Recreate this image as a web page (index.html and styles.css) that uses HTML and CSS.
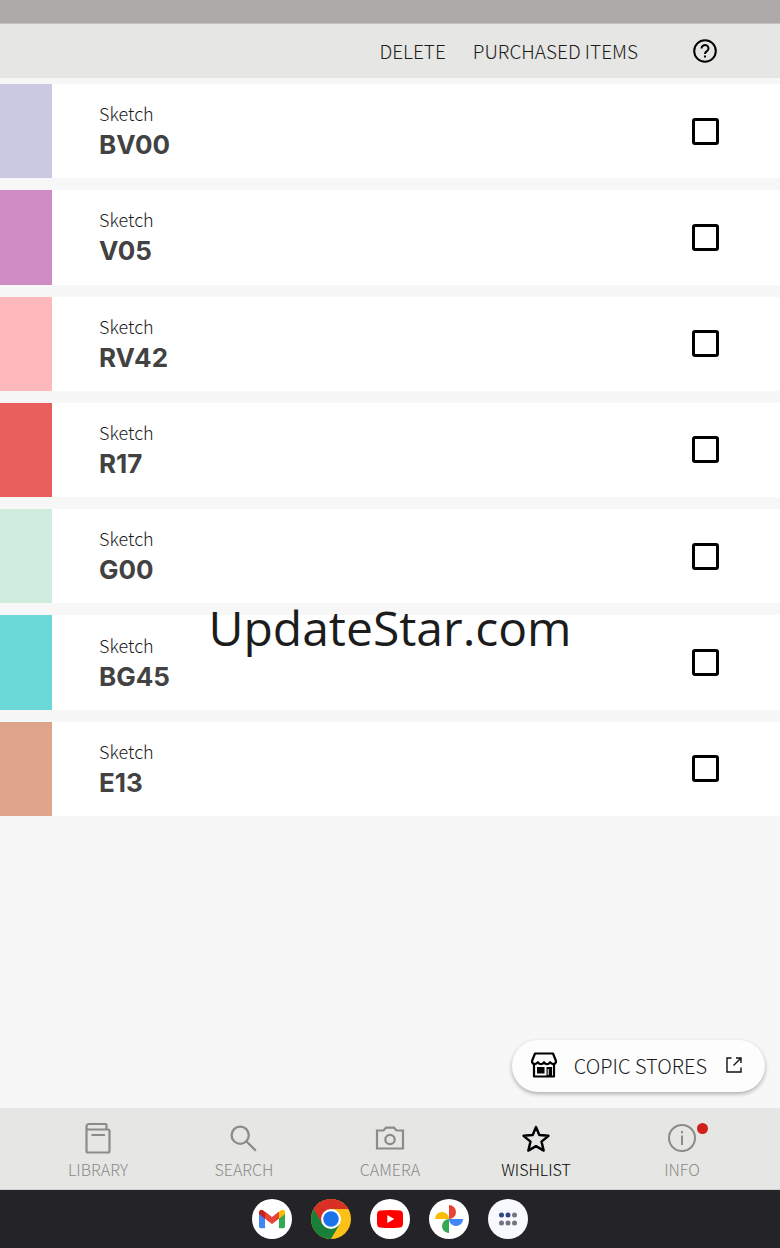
FILE: index.html
```html
<!DOCTYPE html>
<html lang="en">
<head>
<meta charset="utf-8">
<meta name="viewport" content="width=device-width, initial-scale=1">
<title>Wishlist</title>
<link rel="stylesheet" href="styles.css">
</head>
<body>
<div class="app">
  <div class="status-bar"></div>
  <header class="toolbar">
    <button class="toolbar-action" type="button">DELETE</button>
    <button class="toolbar-action" type="button">PURCHASED ITEMS</button>
    <button class="help" type="button" aria-label="Help">
      <svg width="24" height="24" viewBox="0 0 24 24" fill="none" stroke="#000" stroke-width="2"><circle cx="12" cy="12" r="10.8"/><path d="M8.500 9.400a3.500 3.300 0 1 1 5.400 2.700c-1.200.9-1.900 1.400-1.900 2.900"/><path d="M12 16.400v2.200"/></svg>
    </button>
  </header>
  <main class="content">
    <ul class="list">
      <li class="row"><span class="swatch bv00"></span><label class="name" for="c1"><span class="kind">Sketch</span><span class="code">BV00</span></label><input class="check" type="checkbox" id="c1"></li>
      <li class="row"><span class="swatch v05"></span><label class="name" for="c2"><span class="kind">Sketch</span><span class="code">V05</span></label><input class="check" type="checkbox" id="c2"></li>
      <li class="row"><span class="swatch rv42"></span><label class="name" for="c3"><span class="kind">Sketch</span><span class="code">RV42</span></label><input class="check" type="checkbox" id="c3"></li>
      <li class="row"><span class="swatch r17"></span><label class="name" for="c4"><span class="kind">Sketch</span><span class="code">R17</span></label><input class="check" type="checkbox" id="c4"></li>
      <li class="row"><span class="swatch g00"></span><label class="name" for="c5"><span class="kind">Sketch</span><span class="code">G00</span></label><input class="check" type="checkbox" id="c5"></li>
      <li class="row"><span class="swatch bg45"></span><label class="name" for="c6"><span class="kind">Sketch</span><span class="code">BG45</span></label><input class="check" type="checkbox" id="c6"></li>
      <li class="row"><span class="swatch e13"></span><label class="name" for="c7"><span class="kind">Sketch</span><span class="code">E13</span></label><input class="check" type="checkbox" id="c7"></li>
    </ul>
    <a class="stores" href="#stores">
      <svg width="28" height="28" viewBox="0 0 28 28" fill="none" stroke="#000" stroke-width="2.2" stroke-linejoin="round"><path d="M5 2.500h18l3 7.500c0 3.800-4 3.800-6 1.200-1.500 2.600-4.500 2.600-6 0-1.500 2.600-4.500 2.600-6 0-2 2.600-6 2.600-6-1.200z"/><path d="M4 13v12.500h20V13"/><path d="M7 16h7.500v6.500H7z" fill="#000" stroke="none"/><path d="M16.500 25.500V16H22v9.500z" fill="#000" stroke="none"/><path d="M18.200 18v6" stroke="#fff" stroke-width="1"/></svg>
      <span class="stores-label">COPIC STORES</span>
      <svg class="external" width="16" height="16" viewBox="0 0 16 16" fill="none" stroke="#111" stroke-width="1.400"><path d="M5.500 1H1v14h14v-4.500M10 1h5v5M15 1 7.500 8.500"/></svg>
    </a>
  </main>
  <nav class="tabs">
    <a class="tab" href="#library"><svg width="32" height="32" viewBox="0 0 32 32" fill="none" stroke="currentColor" stroke-width="2.200" stroke-linejoin="round"><path d="M4.500 4.500v24.500a1.500 1.500 0 0 0 1.500 1.500h20a1.500 1.500 0 0 0 1.500-1.500V9a1.500 1.500 0 0 0-1.500-1.500H6.500a2 2 0 0 1-2-2V4.500A2.500 2.500 0 0 1 7 2h16.500a1 1 0 0 1 1 1v4.500M9.500 13h13.500"/></svg><span>LIBRARY</span></a>
    <a class="tab" href="#search"><svg width="32" height="32" viewBox="0 0 32 32" fill="none" stroke="currentColor" stroke-width="2.300"><circle cx="12.200" cy="13.200" r="8.600"/><path d="m18.300 19.300 9.500 9.500"/></svg><span>SEARCH</span></a>
    <a class="tab" href="#camera"><svg width="32" height="32" viewBox="0 0 32 32" fill="none" stroke="currentColor" stroke-width="2.200"><path d="M3 8.500h6.500L12 5.700h8l2.500 2.800H29v18H3z"/><circle cx="16" cy="17.500" r="4.700"/></svg><span>CAMERA</span></a>
    <a class="tab active" href="#wishlist" aria-current="page"><svg width="32" height="32" viewBox="0 0 32 32" fill="none" stroke="currentColor" stroke-width="2.400" stroke-linejoin="round"><path d="m16 5 3.300 8 9.200.8-7 5.800 2.200 9-7.700-4.500-7.700 4.500 2.200-9-7-5.800 9.200-.8z"/></svg><span>WISHLIST</span></a>
    <a class="tab" href="#info"><svg width="32" height="32" viewBox="0 0 32 32" fill="none" stroke="currentColor" stroke-width="2"><circle cx="16" cy="16" r="13"/><path d="M16 13.500v9.500M16 9v2.300"/></svg><span>INFO</span><i class="dot"></i></a>
  </nav>
  <footer class="dock">
    <a href="#mail" aria-label="Mail"><svg width="40" height="40" viewBox="0 0 40 40"><circle cx="20" cy="20" r="20" fill="#fff"/><path fill="#4285f4" d="M7 14v13.500A1.800 1.800 0 0 0 8.800 29.300H13V18z"/><path fill="#34a853" d="M33 14v13.500a1.800 1.800 0 0 1-1.800 1.800H27V18z"/><path fill="#fbbc04" d="m27 13 2-1.800c1.800-1.300 4-.2 4 2.100V15l-6 4.700z"/><path fill="#c5221f" d="m13 13-2-1.800c-1.800-1.300-4-.2-4 2.100V15l6 4.700z"/><path fill="#ea4335" d="m13 12.500 7 5.500 7-5.500v7.200L20 25l-7-5.300z"/></svg></a>
    <a href="#browser" aria-label="Browser"><svg width="40" height="40" viewBox="0 0 40 40"><circle cx="20" cy="20" r="20" fill="#fbc116"/><path fill="#188038" d="M2.700 10A20 20 0 0 0 20 40l8.700-15L20 20z"/><path fill="#d93025" d="M2.700 10A20 20 0 0 1 37.300 10H20l-8.700 15z"/><circle cx="20" cy="20" r="10" fill="#fff"/><circle cx="20" cy="20" r="7.800" fill="#1a73e8"/></svg></a>
    <a href="#video" aria-label="Video"><svg width="40" height="40" viewBox="0 0 40 40"><circle cx="20" cy="20" r="20" fill="#fff"/><path fill="#f00" d="M10 11.500q10-1 20 0 3 .5 3 4v9q0 3.500-3 4-10 1-20 0-3-.5-3-4v-9q0-3.500 3-4z"/><path fill="#fff" d="m17.300 16 7 4-7 4z"/></svg></a>
    <a href="#photos" aria-label="Photos"><svg width="40" height="40" viewBox="0 0 40 40"><circle cx="20" cy="20" r="20" fill="#fff"/><path fill="#ea4335" d="M20 6a7 7 0 0 1 0 14z"/><path fill="#4285f4" d="M34 20a7 7 0 0 1-14 0z"/><path fill="#34a853" d="M20 34a7 7 0 0 1 0-14z"/><path fill="#fbbc04" d="M6 20a7 7 0 0 1 14 0z"/></svg></a>
    <a href="#apps" aria-label="All apps"><svg width="40" height="40" viewBox="0 0 40 40"><circle cx="20" cy="20" r="20" fill="#f8f8ff"/><g fill="#747482"><circle cx="26.500" cy="16" r="2.500"/><circle cx="13.500" cy="24" r="2.500"/><circle cx="20" cy="24" r="2.500"/><circle cx="26.500" cy="24" r="2.500"/></g><g fill="#304584"><circle cx="13.500" cy="16" r="2.500"/><circle cx="20" cy="16" r="2.500"/></g></svg></a>
  </footer>
  <div class="watermark">UpdateStar.com</div>
</div>
</body>
</html>
```
FILE: styles.css
```css
* { box-sizing: border-box; }
body {
  margin: 0;
  font-family: "Noto Sans CJK JP", "Noto Sans", sans-serif;
  font-weight: 300;
  color: #1c1c1c;
}
button { border: 0; padding: 0; background: none; font: inherit; color: inherit; }
a { color: inherit; text-decoration: none; }
svg { display: block; }
.app {
  position: relative;
  display: flex;
  flex-direction: column;
  min-height: 100vh;
  background: #f7f7f7;
}
.status-bar { height: 24px; background: #acaba9; border-bottom: 1px solid #c4c3c1; }
.toolbar {
  display: flex;
  align-items: center;
  justify-content: flex-end;
  gap: 27px;
  height: 54px;
  padding-right: 63px;
  background: #e6e6e4;
}
.toolbar-action { font-size: 19px; line-height: 24px; }
.help { margin-left: 28px; }
.content { flex: 1; display: flex; flex-direction: column; padding-top: 6px; }
.list {
  display: grid;
  grid-auto-rows: 1fr;
  gap: 12px;
  min-height: 732px;
  margin: 0;
  padding: 0;
  list-style: none;
}
.row { display: flex; align-items: center; padding-right: 61px; background: #fff; }
.swatch { align-self: stretch; width: 52px; }
.bv00 { background: #cbc8e2; }
.v05 { background: #cf8cc4; }
.rv42 { background: #ffb9bb; }
.r17 { background: #e95f5d; }
.g00 { background: #d0ecdf; }
.bg45 { background: #6bd9d7; }
.e13 { background: #dea58b; }
.name { flex: 1; display: flex; flex-direction: column; padding-left: 47px; }
.kind { font-size: 18px; line-height: 28px; }
.code {
  font-family: Inter, sans-serif;
  font-size: 26px;
  line-height: 36px;
  font-weight: 700;
  color: #424242;
}
.check {
  appearance: none;
  width: 27px;
  height: 27px;
  margin: 0;
  border: 3px solid #000;
  border-radius: 3px;
  background: #fff;
}
.check:checked { background: #000; }
.stores {
  display: flex;
  align-items: center;
  align-self: flex-end;
  height: 52px;
  margin: auto 15px 16px 0;
  padding: 0 23px 2px 18px;
  border-radius: 26px;
  background: #fdfdfd;
  box-shadow: 0 2px 4px rgb(0 0 0 / 30%);
  font-size: 20px;
  gap: 16px;
}
.external { margin-left: 3px; }
.tabs {
  display: grid;
  grid-template-columns: repeat(5, 1fr);
  height: 82px;
  padding: 0 25px;
  background: #e6e6e4;
  border-bottom: 1px solid #d0d0ce;
}
.tab {
  position: relative;
  display: flex;
  flex-direction: column;
  align-items: center;
  gap: 3px;
  padding-top: 14px;
  font-size: 16px;
  line-height: 24px;
  color: #8b8b89;
}
.active { color: #000; }
.dot {
  position: absolute;
  top: 15px;
  left: calc(50% + 15px);
  width: 11px;
  height: 11px;
  border-radius: 50%;
  background: #d0201a;
}
.dock {
  display: flex;
  align-items: center;
  justify-content: center;
  gap: 19px;
  height: 58px;
  background: #242428;
}
.watermark {
  position: absolute;
  top: 592px;
  left: 0;
  right: 0;
  text-align: center;
  font-family: "Open Sans", sans-serif;
  font-size: 48px;
  line-height: 72px;
  font-weight: 400;
  pointer-events: none;
}
```
